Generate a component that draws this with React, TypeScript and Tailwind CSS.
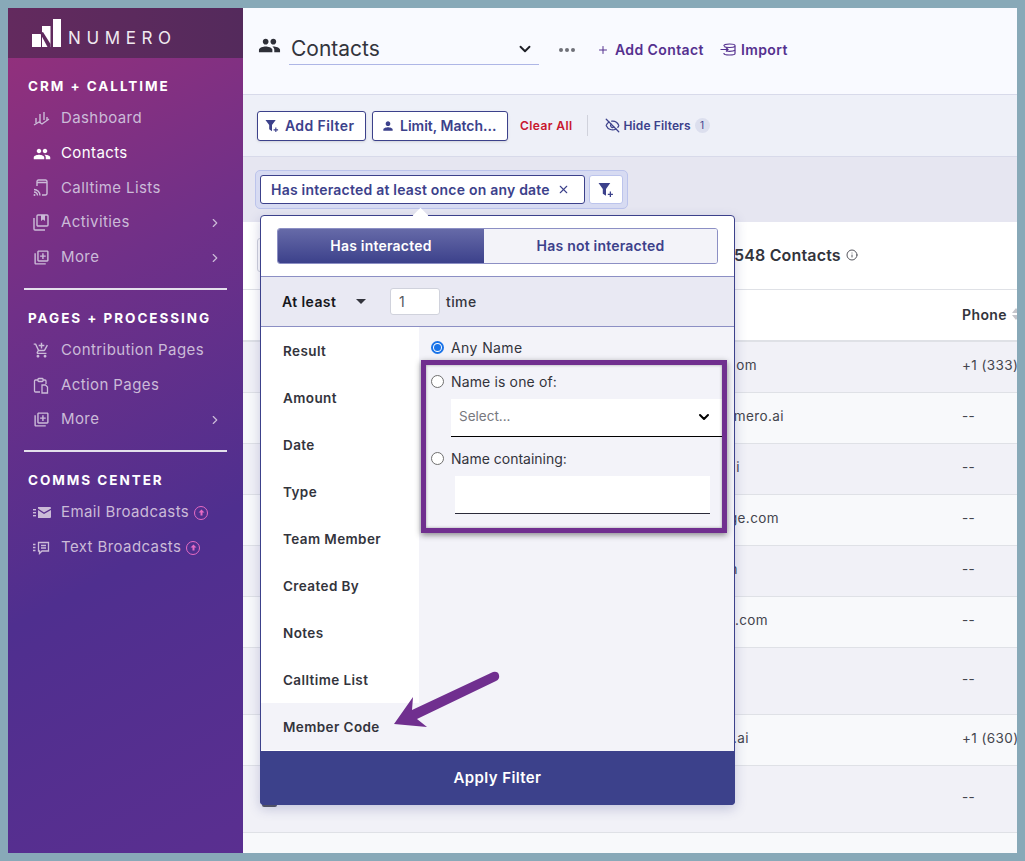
import { ChevronDown, ChevronRight, EyeOff, Info, Plus, X } from 'lucide-react'
import { MdOutlineLibraryAdd, MdPeople, MdAddShoppingCart, MdPerson } from 'react-icons/md'

const font = { fontFamily: 'Inter, "Noto Sans", sans-serif' }

function LogoMark() {
    return (
        <svg width="30" height="28" viewBox="0 0 30 28" fill="#fff">
            <rect x="0" y="15" width="9" height="13" />
            <rect x="10" y="7" width="8.500" height="21" />
            <rect x="21" y="0" width="8" height="28" />
            <path d="M8 14 L11 13 L18.500 25 L18.500 28 L15.500 28 Z" fill="#5f2a5e" />
        </svg>
    )
}

function DashIcon() {
    return (
        <svg width="17" height="17" viewBox="0 0 17 17" fill="none" stroke="currentColor" strokeWidth="1.4">
            <path d="M3 8v5M7 4v9M11 2v8M14 7v3" />
            <path d="M1 15l5-3 3 2 7-5" />
        </svg>
    )
}

function CallIcon() {
    return (
        <svg width="17" height="18" viewBox="0 0 17 18" fill="none" stroke="currentColor" strokeWidth="1.4">
            <path d="M4 7V2.500A1.500 1.500 0 0 1 5.500 1h7A1.500 1.500 0 0 1 14 2.500v12a1.500 1.500 0 0 1-1.500 1.500H9" />
            <path d="M4 3.500h10M1 10.500a6 6 0 0 1 6 6M1 13a3.500 3.500 0 0 1 3.500 3.500" />
            <circle cx="1.500" cy="16" r="1" fill="currentColor" stroke="none" />
        </svg>
    )
}

function ActivityIcon() {
    return (
        <svg width="16" height="17" viewBox="0 0 16 17" fill="none" stroke="currentColor" strokeWidth="1.4">
            <rect x="4" y="1" width="11" height="11" rx="1" />
            <path d="M1 4v11a1 1 0 0 0 1 1h10" />
            <path d="M8 1h4v6l-2-1.500L8 7z" fill="currentColor" stroke="none" />
        </svg>
    )
}

function ClipIcon() {
    return (
        <svg width="16" height="17" viewBox="0 0 16 17" fill="none" stroke="currentColor" strokeWidth="1.3">
            <path d="M5 3H2.500A1 1 0 0 0 1.500 4v10a1 1 0 0 0 1 1H7" />
            <path d="M10 3h2a1 1 0 0 1 1 1v3" />
            <rect x="5" y="1.500" width="5" height="3" rx="0.700" />
            <path d="M9 8h3.500l2 2v6H9z" />
        </svg>
    )
}

function MailIcon() {
    return (
        <svg width="18" height="13" viewBox="0 0 18 13" fill="currentColor">
            <path d="M5 1h12a1 1 0 0 1 1 1v.5l-7 4-6-4z" />
            <path d="M5 4v8h12a1 1 0 0 0 1-1V4l-7 4z" />
            <rect x="0" y="3" width="3" height="1.400" />
            <rect x="0" y="6" width="3" height="1.400" />
            <rect x="0" y="9" width="3" height="1.400" />
        </svg>
    )
}

function TextIcon() {
    return (
        <svg width="17" height="14" viewBox="0 0 17 14" fill="none" stroke="currentColor" strokeWidth="1.3">
            <path d="M5.500 1.500h10v8.500H9l-2.500 2.500v-2.500h-1z" />
            <path d="M8 4.500h5M8 7h5" />
            <path d="M0 3.500h2.500M0 6.500h2.500M0 9.500h2.500" />
        </svg>
    )
}

function UpBadge() {
    return (
        <span className="ml-[5px] inline-flex h-[14px] w-[14px] items-center justify-center rounded-full border-[1.5px] border-[#e66bc4] text-[#e66bc4]">
            <svg width="7" height="7" viewBox="0 0 7 7" fill="currentColor">
                <path d="M3.500 0.500L6.500 3.500H4.500V6.500H2.500V3.500H0.500Z" />
            </svg>
        </span>
    )
}

function FilterPlus({ size = 15 }: { size?: number }) {
    return (
        <svg width={size} height={size} viewBox="0 0 15 15" fill="#3c418b">
            <path d="M0.500 1h11L7.500 6.500V13L4.500 11V6.500z" />
            <path d="M11 9h1.200v2H14v1.200h-1.800V14H11v-1.800H9.200V11H11z" />
        </svg>
    )
}

function ImportIcon() {
    return (
        <svg width="16" height="13" viewBox="0 0 16 13" fill="none" stroke="#55308f" strokeWidth="1.200">
            <path d="M4 3V2.500C4 1.500 6.500 1 9.500 1S15 1.500 15 2.500v8c0 1-2.500 1.500-5.500 1.500S4 11.500 4 10.500V10" />
            <path d="M4 3.500c1 .8 3 1 5.500 1S14 4.300 15 3.500M7 8c1 .3 1.500.3 2.500.3 2.500 0 4.500-.3 5.500-1" />
            <path d="M0.500 6.500H8M6 4.500l2 2-2 2" />
        </svg>
    )
}

function Radio({ checked }: { checked?: boolean }) {
    return checked ? (
        <span className="flex h-[13px] w-[13px] shrink-0 items-center justify-center rounded-full border-2 border-[#1a73e8] bg-white">
            <span className="h-[7px] w-[7px] rounded-full bg-[#1a73e8]" />
        </span>
    ) : (
        <span className="h-[13px] w-[13px] shrink-0 rounded-full border border-[#6f6f6f] bg-white" />
    )
}

function NavItem({ icon, label, active, more, badge, short }: { icon: React.ReactNode; label: string; active?: boolean; more?: boolean; badge?: boolean; short?: boolean }) {
    return (
        <div className={`flex items-center pl-[25px] pr-[21px] text-[15px] ${short ? 'h-[34px]' : 'h-[35px]'} ${active ? 'text-white' : 'text-[#cbbbd8]'}`}>
            <span className="flex w-[28px] shrink-0 items-center">{icon}</span>
            <span>{label}</span>
            {badge && <UpBadge />}
            {more && <ChevronRight size={14} className="ml-auto" />}
        </div>
    )
}

function SectionTitle({ children, className }: { children: string; className: string }) {
    return <div className={`h-[20px] pl-[20px] text-[13.5px] font-bold leading-[20px] tracking-[0.145em] text-white ${className}`}>{children}</div>
}

function Sidebar() {
    return (
        <aside className="flex w-[235px] shrink-0 flex-col bg-[linear-gradient(152deg,#98307a_0%,#703088_32%,#4f2f8f_64%,#5a2f90_100%)]">
            <div className="flex h-[50px] items-center bg-[linear-gradient(90deg,#632a5e,#542a5c)] pl-[24px]">
                <LogoMark />
                <span className="ml-[6px] mt-[10px] text-[17px] font-normal leading-none tracking-[0.33em] text-[#f0e9f0]">NUMERO</span>
            </div>
            <SectionTitle className="mt-[18px]">CRM + CALLTIME</SectionTitle>
            <div className="mt-[5px]">
                <NavItem icon={<DashIcon />} label="Dashboard" />
                <NavItem icon={<MdPeople size={18} />} label="Contacts" active />
                <NavItem icon={<CallIcon />} label="Calltime Lists" short />
                <NavItem icon={<ActivityIcon />} label="Activities" more />
                <NavItem icon={<MdOutlineLibraryAdd size={17} />} label="More" more />
            </div>
            <div className="mx-[16px] mt-[13px] h-[2px] bg-[#e4e0ec]" />
            <SectionTitle className="mt-[18px]">{'PAGES + PROCESSING'}</SectionTitle>
            <div className="mt-[5px]">
                <NavItem icon={<MdAddShoppingCart size={17} />} label="Contribution Pages" />
                <NavItem icon={<ClipIcon />} label="Action Pages" short />
                <NavItem icon={<MdOutlineLibraryAdd size={17} />} label="More" more />
            </div>
            <div className="mx-[16px] mt-[13px] h-[2px] bg-[#e4e0ec]" />
            <SectionTitle className="mt-[18px]">COMMS CENTER</SectionTitle>
            <div className="mt-[5px]">
                <NavItem icon={<MailIcon />} label="Email Broadcasts" badge />
                <NavItem icon={<TextIcon />} label="Text Broadcasts" badge />
            </div>
        </aside>
    )
}

const rows = [
    { email: 'om', end: 'w-[514px]', phone: '+1 (333)', h: 'h-[51px]', bg: 'bg-[#f1f1f7]' },
    { email: 'mero.ai', end: 'w-[541px]', phone: '--', h: 'h-[51px]', bg: 'bg-[#f8f9fb]' },
    { email: 'i', end: 'w-[497px]', phone: '--', h: 'h-[51px]', bg: 'bg-[#f1f1f7]' },
    { email: 'ge.com', end: 'w-[536px]', phone: '--', h: 'h-[51px]', bg: 'bg-[#f8f9fb]' },
    { email: 'n', end: 'w-[495px]', phone: '--', h: 'h-[51px]', bg: 'bg-[#f1f1f7]' },
    { email: '.com', end: 'w-[525px]', phone: '--', h: 'h-[51px]', bg: 'bg-[#f8f9fb]' },
    { email: '', end: 'w-[500px]', phone: '--', h: 'h-[67px]', bg: 'bg-[#f1f1f7]' },
    { email: '.ai', end: 'w-[506px]', phone: '+1 (630)', h: 'h-[51px]', bg: 'bg-[#f8f9fb]' },
    { email: '', end: 'w-[500px]', phone: '--', h: 'h-[67px]', bg: 'bg-[#f1f1f7]', check: true },
]

function Table() {
    return (
        <div className="flex-1 overflow-hidden">
            <div className="flex h-[67px] items-center bg-white pb-[2px] pl-[14px]">
                <div className="h-[34px] w-[100px] rounded-[3px] border border-[#cfd2dc]" />
                <span className="ml-[377px] text-[16px] font-semibold tracking-[0.01em] text-[#33343c]">548 Contacts</span>
                <Info size={12} className="ml-[5px] text-[#55565e]" />
            </div>
            <div className="grid h-[53px] grid-cols-[719px_1fr] items-center border-y border-b-2 border-y-[#dfe1e6] bg-white pb-[2px]">
                <span />
                <span className="flex items-center whitespace-nowrap text-[14px] font-semibold text-[#33343c]">
                    Phone
                    <svg className="ml-[5px]" width="8" height="12" viewBox="0 0 8 12" fill="#c4c5cb">
                        <path d="M4 0l4 5H0zM4 12L0 7h8z" />
                    </svg>
                </span>
            </div>
            {rows.map((row, i) => (
                <div key={i} className={`grid grid-cols-[719px_1fr] items-center border-b border-[#dfe1e6] pb-[4px] text-[13.5px] text-[#44454d] ${row.h} ${row.bg}`}>
                    <div className="relative flex items-center">
                        {row.check && <span className="ml-[19px] mt-[4px] h-[16px] w-[15px] rounded-[2px] bg-[#55565e]" />}
                        {!row.check && <span className={`text-right ${row.end}`}>{row.email}</span>}
                    </div>
                    <span className="overflow-hidden whitespace-nowrap">{row.phone}</span>
                </div>
            ))}
            <div className="h-[21px] bg-[#f8f9fb]" />
        </div>
    )
}

const filterTabs = ['Result', 'Amount', 'Date', 'Type', 'Team Member', 'Created By', 'Notes', 'Calltime List']

function FilterPopover() {
    return (
        <div className="absolute left-[17px] top-[207px] z-10 flex h-[590px] w-[475px] flex-col rounded-[4px] border border-[#3c418b] bg-white shadow-[0_4px_12px_rgba(60,65,139,0.25)]">
            <div className="absolute -top-[6px] left-[154px] h-[11px] w-[11px] rotate-45 bg-white" />
            <div className="flex h-[60px] shrink-0 items-start px-[16px] pt-[12px]">
                <div className="flex h-[36px] w-full overflow-hidden rounded-[3px] border border-[#8c8fc4] text-[14px] font-semibold tracking-[0.015em]">
                    <div className="flex w-[206px] items-center justify-center bg-[linear-gradient(180deg,#666aa8,#3c418b)] pb-[2px] text-white">Has interacted</div>
                    <div className="flex flex-1 items-center justify-center bg-[#f3f3f9] pb-[2px] text-[#3c418b]">Has not interacted</div>
                </div>
            </div>
            <div className="flex h-[51px] shrink-0 items-center border-y border-[#8c8fc4] bg-[#e9e9f3] pl-[21px] text-[14px]">
                <span className="w-[57px] pb-[1px] font-semibold text-[#16171c]">At least</span>
                <span className="ml-[17px] h-0 w-0 border-x-[5px] border-t-[5px] border-x-transparent border-t-[#33343c]" />
                <span className="ml-[24px] flex h-[27px] w-[50px] items-center rounded-[3px] border border-[#d0d2dc] bg-white pl-[8px] text-[#55565e]">1</span>
                <span className="ml-[6px] pb-[1px] font-medium text-[#33343c]">time</span>
            </div>
            <div className="flex min-h-0 flex-1">
                <div className="flex w-[158px] shrink-0 flex-col text-[13.5px] font-semibold text-[#33343c]">
                    {filterTabs.map((tab) => (
                        <div key={tab} className="flex h-[47px] items-center pl-[22px] pt-[2px]">{tab}</div>
                    ))}
                    <div className="flex h-[47px] items-center bg-[#f3f3f9] pl-[22px] pt-[2px]">Member Code</div>
                </div>
                <div className="relative flex-1 bg-[#f3f3f9] text-[14px] text-[#33343c]">
                    <div className="flex h-[40px] items-center gap-[7px] pl-[12px]">
                        <Radio checked />
                        <span>Any Name</span>
                    </div>
                    <div className="flex h-[32px] items-center gap-[7px] pb-[3px] pl-[12px] tracking-[0.01em]">
                        <Radio />
                        <span>Name is one of:</span>
                    </div>
                    <div className="ml-[32px] flex h-[38px] w-[271px] items-center justify-between border-b border-black bg-white pb-[2px] pl-[8px] pr-[10px] text-[13.5px] tracking-normal text-[#77787e]">
                        <span>Select...</span>
                        <ChevronDown size={16} strokeWidth={3} className="text-black" />
                    </div>
                    <div className="mt-[7px] flex h-[28px] items-center gap-[7px] pl-[12px] tracking-normal">
                        <Radio />
                        <span>Name containing:</span>
                    </div>
                    <div className="ml-[36px] mt-[4px] h-[38px] w-[255px] border-b border-[#2b2b3a] bg-white" />
                    {/* annotation box */}
                    <div className="pointer-events-none absolute left-[2px] top-[33px] h-[173px] w-[306px] border-[5px] border-[#702f8f] shadow-[0_2px_6px_rgba(0,0,0,0.45),inset_0_0_3px_rgba(0,0,0,0.35)]" />
                </div>
            </div>
            <div className="-mx-px -mb-px flex h-[54px] shrink-0 items-center justify-center rounded-b-[4px] bg-[#3c418b] text-[15px] font-semibold text-white">Apply Filter</div>
        </div>
    )
}

export default function App() {
    return (
        <div className="h-[861px] w-[1025px] overflow-hidden bg-[#88a9b8] p-2 tracking-[0.025em]" style={font}>
            <div className="flex h-[845px] w-[1009px]">
                <Sidebar />
                <main className="relative flex min-w-0 flex-1 flex-col overflow-hidden bg-[#f8f9fb]">
                    <div className="flex h-[87px] shrink-0 items-start border-b border-[#d8daea] bg-[#f9faff] pl-[15px] pt-[26px]">
                        <MdPeople size={23} className="text-[#2e2f38]" />
                        <div className="ml-[8px] flex h-[31px] w-[250px] items-center justify-between border-b border-[#aeb6e6] pl-[2px] pr-[5px] text-[21px] tracking-normal text-[#33343c]">
                            <span>Contacts</span>
                            <ChevronDown size={18} strokeWidth={2.5} className="text-[#1f2027]" />
                        </div>
                        <div className="ml-[20px] mt-[14px] flex gap-[2px]">
                            <span className="h-[4px] w-[4px] rounded-full bg-[#6f7078]" />
                            <span className="h-[4px] w-[4px] rounded-full bg-[#6f7078]" />
                            <span className="h-[4px] w-[4px] rounded-full bg-[#6f7078]" />
                        </div>
                        <div className="ml-[22px] mt-[5px] flex items-center text-[14px] font-semibold text-[#55308f]">
                            <Plus size={12} strokeWidth={2} />
                            <span className="ml-[6px]">Add Contact</span>
                            <span className="ml-[16px]"><ImportIcon /></span>
                            <span className="ml-[5px]">Import</span>
                        </div>
                    </div>
                    <div className="flex h-[62px] shrink-0 items-center border-b border-[#d8daea] bg-[#eef0f8] pl-[14px]">
                        <div className="flex h-[30px] w-[109px] items-center gap-[6px] rounded-[3px] border border-[#3c418b] bg-white pl-[7px] text-[14px] font-semibold text-[#3c418b] shadow-sm">
                            <FilterPlus size={14} />
                            <span>Add Filter</span>
                        </div>
                        <div className="ml-[6px] flex h-[30px] w-[136px] items-center gap-[5px] rounded-[3px] border border-[#3c418b] bg-white pl-[8px] text-[14px] font-semibold tracking-normal text-[#3c418b] shadow-sm">
                            <MdPerson size={14} />
                            <span>Limit, Match...</span>
                        </div>
                        <span className="ml-[12px] text-[12px] font-semibold text-[#c8162e]">Clear All</span>
                        <span className="ml-[14px] h-[21px] w-px bg-[#d0d2dc]" />
                        <EyeOff size={15} className="ml-[17px] text-[#3c418b]" />
                        <span className="ml-[4px] text-[12px] font-semibold tracking-[0.01em] text-[#3c418b]">Hide Filters</span>
                        <span className="ml-[4px] flex h-[15px] w-[15px] items-center justify-center rounded-full bg-[#dcdfee] text-[10px] text-[#3c418b]">1</span>
                    </div>
                    <div className="flex h-[65px] shrink-0 items-start bg-[#e6e6f1] pl-[12px] pt-[13px]">
                        <div className="flex h-[39px] w-[373px] items-center gap-[4px] rounded-[5px] border border-[#bcc4ec] bg-[#d7dbf2] pl-[4px]">
                            <div className="flex h-[29px] w-[325px] items-center rounded-[3px] border border-[#3c418b] bg-white pl-[10px] text-[14px] font-semibold tracking-[0.015em] text-[#3c418b]">
                                <span>Has interacted at least once on any date</span>
                                <X size={13} className="ml-[7px]" />
                            </div>
                            <div className="flex h-[29px] w-[34px] items-center justify-center rounded-[3px] border border-[#bcc4ec] bg-white">
                                <FilterPlus size={16} />
                            </div>
                        </div>
                    </div>
                    <Table />
                    <FilterPopover />
                    {/* annotation arrow */}
                    <svg className="pointer-events-none absolute left-[145px] top-[660px] z-20" width="120" height="70" viewBox="0 0 120 70" fill="#702f8f">
                        <path d="M6 56 L25 29 L24 42 L105 4 Q110 3 111 7 Q112 11 108 13 L29 51 L39 59 Z" />
                    </svg>
                </main>
            </div>
        </div>
    )
}
